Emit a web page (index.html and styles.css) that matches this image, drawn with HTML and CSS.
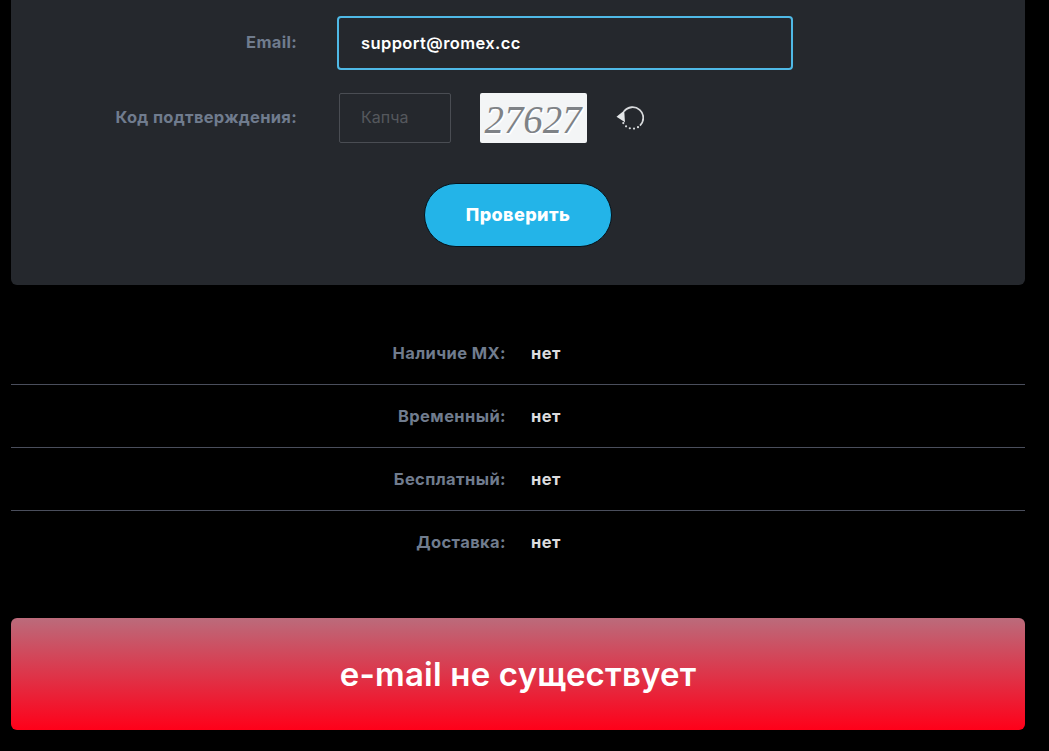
FILE: index.html
```html
<!DOCTYPE html>
<html lang="ru">
<head>
<meta charset="utf-8">
<title>Проверка email</title>
<link rel="stylesheet" href="styles.css">
</head>
<body>
<main class="page">
  <form class="card">
    <div class="row row-email">
      <label class="label">Email:</label>
      <div class="email-input">support@romex.cc</div>
    </div>
    <div class="row row-captcha">
      <label class="label">Код подтверждения:</label>
      <div class="captcha-input">Капча</div>
      <div class="captcha-img">
        <svg class="captcha-svg" width="107" height="50" viewBox="0 0 107 50">
          <text class="cap-shadow" x="5.5" y="41" textLength="97" lengthAdjust="spacingAndGlyphs">27627</text>
          <text class="cap-text" x="4.5" y="40" textLength="97" lengthAdjust="spacingAndGlyphs">27627</text>
        </svg>
      </div>
      <svg class="refresh" width="28" height="28" viewBox="0 0 28 28">
        <path class="ref-solid" d="M8 7.5A10.7 10.7 0 1 1 24 21.6"/>
        <path class="ref-dots" d="M22 23.2A10.7 10.7 0 0 1 7 18.5"/>
        <path class="ref-head" d="M0.5 12.7L8.2 6.5L9 18.2Z"/>
      </svg>
    </div>
    <div class="actions"><button class="btn" type="button">Проверить</button></div>
  </form>
  <section class="results">
    <div class="res-row"><span class="res-key">Наличие MX:</span><span class="res-val">нет</span></div>
    <div class="res-row"><span class="res-key">Временный:</span><span class="res-val">нет</span></div>
    <div class="res-row"><span class="res-key">Бесплатный:</span><span class="res-val">нет</span></div>
    <div class="res-row"><span class="res-key">Доставка:</span><span class="res-val">нет</span></div>
  </section>
  <div class="banner">e-mail не существует</div>
</main>
</body>
</html>
```
FILE: styles.css
```css
* { box-sizing: border-box; }
html, body { margin: 0; height: 751px; overflow: hidden; background: #000; }
body { font-family: "Inter", "Liberation Sans", sans-serif; }
.page { padding: 0 24px 0 11px; }
.card {
  height: 285px;
  background: #25282d;
  border-radius: 0 0 6px 6px;
  padding-top: 16px;
}
.row { display: flex; align-items: center; }
.row-email { height: 54px; }
.row-captcha { height: 50px; margin-top: 23px; }
.label {
  width: 286px;
  text-align: right;
  font-size: 16.5px;
  font-weight: 700;
  letter-spacing: 0.3px;
  line-height: 20px;
  margin-top: -2px;
  color: #707c8e;
}
.email-input {
  width: 456px;
  height: 54px;
  margin-left: 40px;
  padding-left: 22px;
  display: flex;
  align-items: center;
  background: #25282d;
  border: 2px solid #4fb9e6;
  border-radius: 4px;
  color: #fff;
  font-size: 16.5px;
  font-weight: 600;
  letter-spacing: 0.4px;
}
.captcha-input {
  width: 112px;
  height: 50px;
  margin-left: 42px;
  padding: 0 0 2px 21px;
  display: flex;
  align-items: center;
  border: 1px solid #4a4d53;
  border-radius: 2px;
  color: #55585d;
  font-size: 16px;
}
.captcha-img {
  width: 107px;
  height: 50px;
  margin-left: 29px;
  background: #f3f5f6;
  border-radius: 2px;
}
.captcha-svg { display: block; }
.cap-text, .cap-shadow {
  font-family: "Liberation Serif", serif;
  font-style: italic;
  font-size: 40px;
}
.cap-text { fill: #7e8286; }
.cap-shadow { fill: #ffffff; stroke: #ffffff; stroke-width: 1; }
.refresh { margin-left: 29px; }
.ref-solid { fill: none; stroke: #d8dadc; stroke-width: 1.8; }
.ref-dots { fill: none; stroke: #d8dadc; stroke-width: 2.2; stroke-linecap: round; stroke-dasharray: 0 4.2; }
.ref-head { fill: #e4e6e8; }
.actions { display: flex; justify-content: center; margin-top: 40px; }
.btn {
  width: 188px;
  height: 64px;
  background: #23b4e8;
  border: 1px solid #05141c;
  border-radius: 32px;
  color: #fff;
  font-family: inherit;
  font-size: 18px;
  font-weight: 800;
  letter-spacing: 0.4px;
  padding: 0 0 2px;
}
.results { margin-top: 37px; }
.res-row {
  height: 63px;
  display: flex;
  align-items: center;
  border-bottom: 1px solid #4a4e5c;
}
.res-row:last-child { border-bottom: 0; height: 62px; }
.res-key {
  width: 495px;
  text-align: right;
  font-size: 16.5px;
  font-weight: 700;
  letter-spacing: 0.4px;
  color: #707c8e;
}
.res-val {
  margin-left: 25px;
  color: #dcdcde;
  font-size: 16.5px;
  font-weight: 700;
  letter-spacing: 0.4px;
}
.banner {
  height: 112px;
  margin-top: 45px;
  display: flex;
  align-items: center;
  justify-content: center;
  background: linear-gradient(to bottom, #bb6b7b 0%, #ff0019 100%);
  border-radius: 6px;
  color: #fff;
  font-size: 33px;
  font-weight: 600;
  letter-spacing: 0.2px;
}
```
